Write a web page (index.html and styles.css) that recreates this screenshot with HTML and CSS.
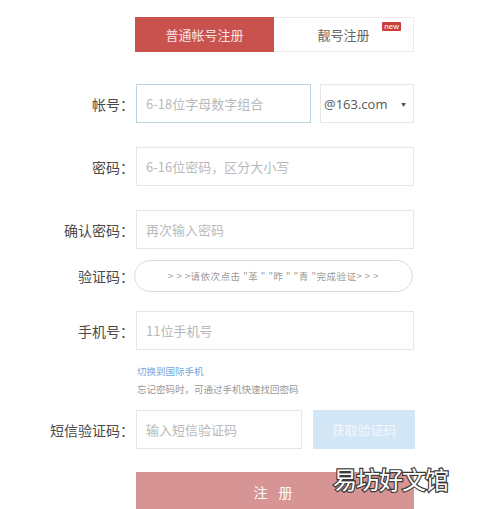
FILE: index.html
```html
<!DOCTYPE html>
<html lang="zh">
<head>
<meta charset="utf-8">
<link rel="stylesheet" href="styles.css">
</head>
<body>
<div class="page">
  <div class="tabs">
    <div class="tab active">普通帐号注册</div>
    <div class="tab">靓号注册<span class="badge">new</span></div>
  </div>

  <div class="row r1">
    <label class="lbl">帐号：</label>
    <div class="field account focus"><span class="ph">6-18位字母数字组合</span></div>
    <div class="field select"><span class="val">@163.com</span><span class="arrow">▼</span></div>
  </div>

  <div class="row r2">
    <label class="lbl">密码：</label>
    <div class="field full"><span class="ph">6-16位密码，区分大小写</span></div>
  </div>

  <div class="row r3">
    <label class="lbl">确认密码：</label>
    <div class="field full"><span class="ph">再次输入密码</span></div>
  </div>

  <div class="row r4">
    <label class="lbl">验证码：</label>
    <div class="captcha">&gt; &gt; &gt;请依次点击 "革 " "昨 " "青 "完成验证&gt; &gt; &gt;</div>
  </div>

  <div class="row r5">
    <label class="lbl">手机号：</label>
    <div class="field full"><span class="ph">11位手机号</span></div>
  </div>

  <div class="notes">
    <a class="link">切换到国际手机</a>
    <p class="hint">忘记密码时，可通过手机快速找回密码</p>
  </div>

  <div class="row r6">
    <label class="lbl">短信验证码：</label>
    <div class="field sms"><span class="ph">输入短信验证码</span></div>
    <div class="getcode">获取验证码</div>
  </div>

  <div class="submit-row">
    <div class="submit">注 册</div>
  </div>

  <div class="watermark">易坊好文馆</div>
</div>
</body>
</html>
```

FILE: styles.css
```css
html, body {
  margin: 0;
  padding: 0;
  background: #fff;
}
body {
  font-family: "Noto Sans CJK SC", "Microsoft YaHei", sans-serif;
  color: #555;
  width: 480px;
  height: 509px;
  overflow: hidden;
}
.page {
  position: relative;
  padding-top: 17px;
  height: 509px;
  box-sizing: border-box;
}
.tabs {
  display: flex;
  margin-left: 135px;
  width: 279px;
  height: 35px;
  border: 1px solid #ececec;
  box-sizing: border-box;
}
.tab {
  position: relative;
  flex: 1;
  display: flex;
  align-items: center;
  justify-content: center;
  font-size: 13px;
  color: #666;
}
.tab.active {
  background: #c9524f;
  color: #f8e2e2;
  margin: -1px 0 -1px -1px;
}
.badge {
  position: absolute;
  top: 4px;
  right: 12px;
  background: #c9413e;
  color: #fff;
  font-family: "Liberation Sans", Arial, sans-serif;
  font-size: 8px;
  line-height: 9px;
  padding: 0 2px;
  border-radius: 1px;
}
.row {
  display: flex;
  align-items: center;
}
.r1 { margin-top: 32px; }
.r2 { margin-top: 24px; }
.r3 { margin-top: 24px; }
.r4 { margin-top: 11px; }
.r5 { margin-top: 19px; }
.r6 { margin-top: 14px; }
.lbl {
  width: 134px;
  text-align: right;
  font-size: 14px;
  color: #4a4a4a;
  margin-right: 2px;
  white-space: nowrap;
}
.field {
  height: 39px;
  border: 1px solid #e6e6e6;
  box-sizing: border-box;
  display: flex;
  align-items: center;
  padding-left: 9px;
  font-size: 13px;
}
.field.focus {
  border-color: #b9d3df;
}
.account { width: 175px; }
.select {
  width: 94px;
  margin-left: 9px;
  padding-left: 3px;
  padding-right: 7px;
  justify-content: space-between;
}
.val {
  font-family: "Open Sans", "Noto Sans", sans-serif;
  font-size: 13px;
  color: #555;
}
.arrow {
  font-size: 5px;
  color: #555;
}
.full { width: 278px; }
.ph {
  color: #b9b9b9;
  font-size: 13px;
}
.captcha {
  width: 279px;
  height: 32px;
  border: 1px solid #dcdcdc;
  border-radius: 16px;
  box-sizing: border-box;
  display: flex;
  align-items: center;
  justify-content: center;
  font-size: 9.5px;
  letter-spacing: 0.5px;
  color: #9a9a9a;
  margin-left: -2px;
}
.notes {
  margin-left: 137px;
  margin-top: 15px;
}
.link {
  display: block;
  font-size: 9.5px;
  color: #6fa7dc;
  line-height: 13px;
}
.hint {
  margin: 5px 0 0;
  font-size: 9.5px;
  color: #999;
  line-height: 13px;
}
.sms { width: 166px; }
.getcode {
  margin-left: 11px;
  width: 102px;
  height: 39px;
  background: #d3e6f6;
  color: #f2f7fc;
  font-size: 13px;
  display: flex;
  align-items: center;
  justify-content: center;
}
.submit-row {
  margin-left: 136px;
  margin-top: 23px;
}
.submit {
  width: 278px;
  height: 40px;
  background: #d69594;
  color: #fff;
  font-size: 14px;
  letter-spacing: 4px;
  display: flex;
  align-items: center;
  justify-content: center;
}
.watermark {
  position: absolute;
  left: 333px;
  top: 461px;
  font-size: 24px;
  font-family: "Noto Sans CJK SC", sans-serif;
  color: #fff;
  -webkit-text-stroke: 2.4px #3a3a3a;
  paint-order: stroke fill;
  letter-spacing: -1px;
}
```
